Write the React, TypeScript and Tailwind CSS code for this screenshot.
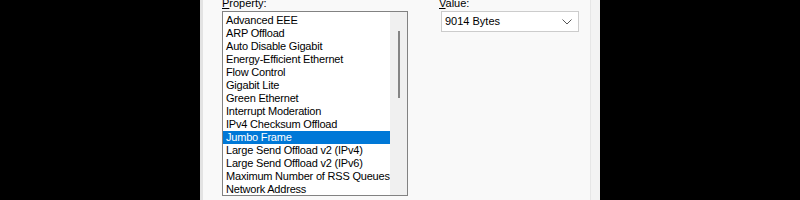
import React from 'react';

const items = [
  'Advanced EEE',
  'ARP Offload',
  'Auto Disable Gigabit',
  'Energy-Efficient Ethernet',
  'Flow Control',
  'Gigabit Lite',
  'Green Ethernet',
  'Interrupt Moderation',
  'IPv4 Checksum Offload',
  'Jumbo Frame',
  'Large Send Offload v2 (IPv4)',
  'Large Send Offload v2 (IPv6)',
  'Maximum Number of RSS Queues',
  'Network Address',
];

export default function App() {
  const selected = 'Jumbo Frame';
  return (
    <div className="flex h-[200px] w-[800px] overflow-hidden bg-black font-['Liberation_Sans',Arial,sans-serif] text-[11px] text-black">
      <div className="w-[200px] shrink-0" />
      {/* dialog panel */}
      <div className="flex h-full w-[400px] shrink-0 border-l-[3px] border-[#e3e3e3] bg-[#f9f9f9]">
        <div className="flex flex-1 gap-[31px] pl-[19px]">
          {/* property column */}
          <div className="flex flex-col">
            <div className="-mt-[4px] h-[15px] leading-[14px]">
              <span className="underline">P</span>roperty:
            </div>
            <div className="flex h-[185px] w-[186px] border border-[#828282] bg-white">
              <div className="flex min-w-0 flex-1 flex-col overflow-hidden pt-[2px] tracking-[-0.2px]">
                {items.map((item) => (
                  <div
                    key={item}
                    className={
                      item === selected
                        ? 'h-[13px] shrink-0 whitespace-nowrap bg-[#0078d7] pl-[3px] leading-[13px] text-white'
                        : 'h-[13px] shrink-0 whitespace-nowrap pl-[3px] leading-[13px]'
                    }
                  >
                    {item}
                  </div>
                ))}
              </div>
              <div className="flex w-[17px] shrink-0 justify-center bg-[#f0f0f0] pt-[19px]">
                <div className="h-[67px] w-[2px] bg-[#858585]" />
              </div>
            </div>
          </div>
          {/* value column */}
          <div className="flex flex-col">
            <div className="-mt-[4px] h-[15px] leading-[14px]">
              <span className="underline">V</span>alue:
            </div>
            <div className="ml-[2px] flex h-[21px] w-[138px] items-center justify-between border border-[#cccccc] bg-white pl-[3px] pr-[6px]">
              <span>9014 Bytes</span>
              <svg width="10" height="6" viewBox="0 0 10 6" fill="none">
                <path d="M0.5 0.5 L5 5 L9.5 0.5" stroke="#555" strokeWidth="1" />
              </svg>
            </div>
          </div>
        </div>
        <div className="w-[10px] border-l border-[#e6e6e6] bg-[#f3f3f3]" />
      </div>
      <div className="flex-1" />
    </div>
  );
}
